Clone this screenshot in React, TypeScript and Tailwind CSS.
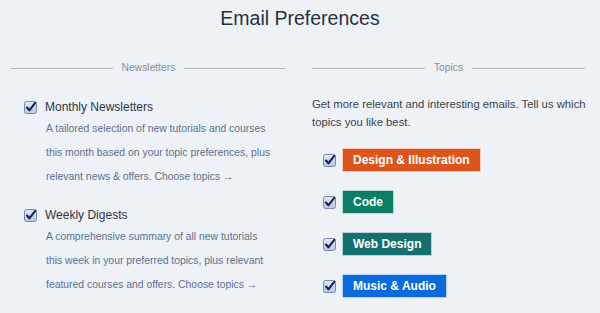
import React from 'react'

const font = { fontFamily: '"Liberation Sans", Arial, Helvetica, sans-serif' }

function Check() {
  return (
    <svg width="13" height="13" viewBox="0 0 13 13" className="shrink-0">
      <defs>
        <linearGradient id="cb" x1="0" y1="0" x2="0" y2="1">
          <stop offset="0" stopColor="#e3e8f5" />
          <stop offset="1" stopColor="#b9c4e0" />
        </linearGradient>
      </defs>
      <rect x="0.5" y="0.5" width="12" height="12" rx="2" fill="url(#cb)" stroke="#7d89ab" />
      <path d="M3 6.5 L5.4 9.3 L11.2 1.8" fill="none" stroke="#16244f" strokeWidth="2.1" strokeLinecap="round" strokeLinejoin="round" />
    </svg>
  )
}

function SectionHead({ label }: { label: string }) {
  return (
    <div className="flex items-center gap-[9px] h-4">
      <div className="flex-1 h-px bg-[#b5b9bf]" />
      <span className="text-[10.3px] text-[#8a9099]">{label}</span>
      <div className="flex-1 h-px bg-[#b5b9bf]" />
    </div>
  )
}

function Newsletter({ title, lines }: { title: string; lines: string[] }) {
  return (
    <div className="pl-[13px]">
      <div className="flex items-center gap-[8px] h-[18px]">
        <Check />
        <span className="text-[12px] text-[#2d3744]">{title}</span>
      </div>
      <div className="pl-[22px] mt-[1px] text-[10.4px] leading-[24px] text-[#5d7190] whitespace-nowrap">
        {lines.map((l, i) => (
          <div key={i}>{l}</div>
        ))}
      </div>
    </div>
  )
}

const topics = [
  { name: 'Design & Illustration', bg: 'bg-[#dd541d]' },
  { name: 'Code', bg: 'bg-[#0d7d63]' },
  { name: 'Web Design', bg: 'bg-[#156f6f]' },
  { name: 'Music & Audio', bg: 'bg-[#0b6bdc]' },
]

export default function App() {
  return (
    <div className="w-[600px] h-[313px] overflow-hidden bg-[#eef1f5]" style={font}>
      <h1 className="pt-[5px] text-center text-[19.5px] leading-[26px] text-[#27313f]">
        Email Preferences
      </h1>
      <div className="grid grid-cols-[275px_273px] gap-[26px] pl-[11px] mt-[29px]">
        <div>
          <SectionHead label="Newsletters" />
          <div className="mt-[22px] flex flex-col gap-[17px]">
            <Newsletter
              title="Monthly Newsletters"
              lines={[
                'A tailored selection of new tutorials and courses',
                'this month based on your topic preferences, plus',
                'relevant news & offers. Choose topics →',
              ]}
            />
            <Newsletter
              title="Weekly Digests"
              lines={[
                'A comprehensive summary of all new tutorials',
                'this week in your preferred topics, plus relevant',
                'featured courses and offers. Choose topics →',
              ]}
            />
          </div>
        </div>
        <div>
          <SectionHead label="Topics" />
          <p className="mt-[19px] text-[11.3px] leading-[18px] text-[#3a434f] whitespace-nowrap">
            Get more relevant and interesting emails. Tell us which
            <br />
            topics you like best.
          </p>
          <div className="mt-[17px] pl-[11px] flex flex-col gap-[18px]">
            {topics.map(t => (
              <div key={t.name} className="flex items-center gap-[6px]">
                <Check />
                <span
                  className={`${t.bg} text-white font-bold text-[12px] leading-[22px] px-[10px] border border-white/70`}
                >
                  {t.name}
                </span>
              </div>
            ))}
          </div>
        </div>
      </div>
    </div>
  )
}
